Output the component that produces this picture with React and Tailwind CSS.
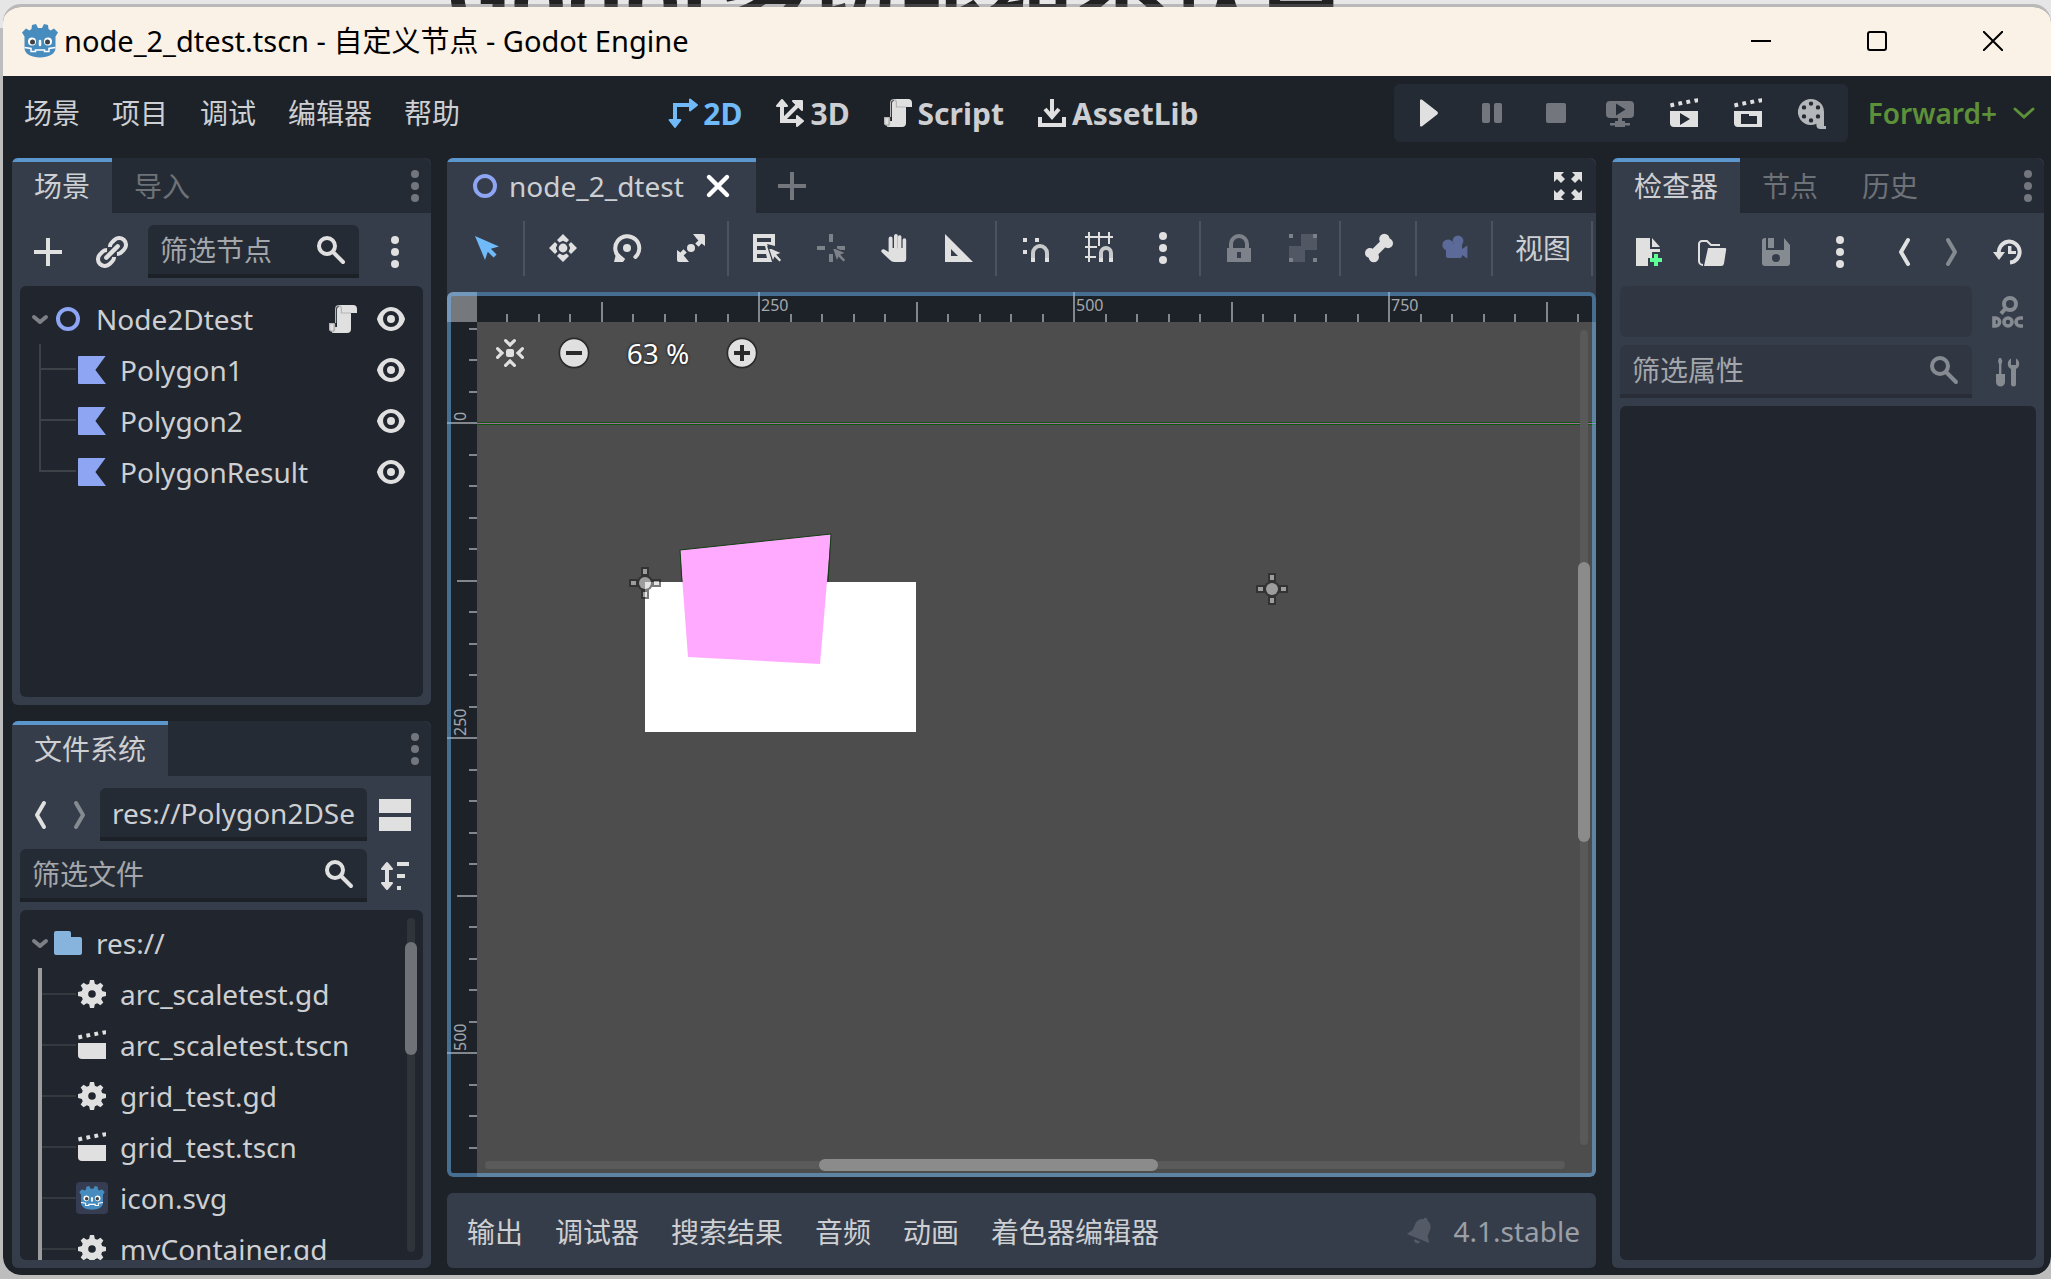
import React from "react";

const SANS = "font-['Noto_Sans','Noto_Sans_CJK_SC',sans-serif]";

function Icon({ children, className = "size-8 shrink-0" }) {
  return (
    <svg viewBox="0 0 16 16" className={className} fill="currentColor" aria-hidden="true">
      {children}
    </svg>
  );
}

const line = { fill: "none", stroke: "currentColor", strokeWidth: 2, strokeLinecap: "round", strokeLinejoin: "round" };

const Dots = (p) => (
  <Icon {...p}>
    <circle cx="8" cy="2" r="2" />
    <circle cx="8" cy="8" r="2" />
    <circle cx="8" cy="14" r="2" />
  </Icon>
);
const Add = (p) => (
  <Icon {...p}>
    <path d="M7 1v6H1v2h6v6h2V9h6V7H9V1z" />
  </Icon>
);
const Link = () => (
  <Icon>
    <g transform="rotate(-45 8 8)" fill="none" stroke="currentColor">
      <path strokeWidth="2" d="M7 5.500A3.100 3.100 0 0 0 4.800 4.600H2.900a3.400 3.400 0 0 0 0 6.800h1.900A3.100 3.100 0 0 0 7 10.500M9 5.500a3.100 3.100 0 0 1 2.200-.9h1.900a3.400 3.400 0 0 1 0 6.800h-1.900A3.100 3.100 0 0 1 9 10.500" />
      <path strokeWidth="2.200" strokeLinecap="round" d="M4 8h8" />
    </g>
  </Icon>
);
const Search = () => (
  <Icon>
    <circle cx="6" cy="6" r="4" fill="none" stroke="currentColor" strokeWidth="2" />
    <path d="M9 9l5 5" {...line} />
  </Icon>
);
const Eye = () => (
  <Icon>
    <path
      fillRule="evenodd"
      d="M8 2C5.443 2 2.209 3.948 1.045 7.705a1 1 0 0 0-.01.55C2.163 12.211 5.5 14 8 14s5.837-1.789 6.965-5.745a1 1 0 0 0 0-.526C13.861 3.935 10.557 2 8 2zm0 2a4 4 0 0 1 0 8 4 4 0 0 1 0-8zm0 2a2 2 0 0 0 0 4 2 2 0 0 0 0-4z"
    />
  </Icon>
);
const Script = () => (
  <Icon>
    <path d="M6 1v1a1 1 0 0 0-1 1v9H3.500v1a1 1 0 0 1-1 1v1H10a2 2 0 0 0 2-2V5h3V3a2 2 0 0 0-2-2z" />
    <path d="M1.300 10.300h2.200V13a1.100 1.100 0 0 1-2.200 0z" stroke="#b4b4b4" strokeWidth=".6" />
    <path d="M6 1.300a1.500 1.500 0 0 1 1.200 1.500V5H12M4.300 10V3A1.700 1.700 0 0 1 6 1.300M3.800 10.200V13a1.500 1.500 0 0 1-1.300 1.700" fill="none" stroke="#b4b4b4" strokeWidth=".6" />
  </Icon>
);
const Ring = () => (
  <Icon>
    <circle cx="8" cy="8" r="5" fill="none" stroke="#8da5f3" strokeWidth="2" />
  </Icon>
);
const Polygon = () => (
  <Icon>
    <path fill="#8da5f3" d="M1.500 1h13.300L9.700 8l5.300 7H1.500a.5.500 0 0 1-.5-.5v-13a.5.500 0 0 1 .5-.5z" />
  </Icon>
);
const Caret = () => (
  <svg viewBox="0 0 24 32" className="h-8 w-6 shrink-0" aria-hidden="true">
    <path d="M6 14l6 5 6-5" fill="none" stroke="#7d8085" strokeWidth="4" strokeLinecap="round" strokeLinejoin="round" />
  </svg>
);
const Folder = () => (
  <Icon>
    <path fill="#87b4dc" d="M2 2a1 1 0 0 0-1 1v10a1 1 0 0 0 1 1h12a1 1 0 0 0 1-1V6a1 1 0 0 0-1-1H9.500V3a1 1 0 0 0-1-1z" />
  </Icon>
);
const Gear = () => (
  <Icon>
    <circle cx="8" cy="8" r="3.600" fill="none" stroke="currentColor" strokeWidth="3.400" />
    {[0, 45, 90, 135, 180, 225, 270, 315].map((a) => (
      <path key={a} transform={`rotate(${a} 8 8)`} d="M7 1h2l.6 2.600H6.400z" />
    ))}
  </Icon>
);
const Clapper = ({ inner }) => (
  <Icon>
    <path d="M1 3.200l1.800-.4.5 1.900-1.900.5zM5 2.400l1.800-.4.5 1.900-1.900.5zM9 1.600l1.800-.4.5 1.900-1.900.5zM13 .9l2-.3v2l-1.500.3z" />
    <path fillRule="evenodd" d={`M1 7h14v8H3a2 2 0 0 1-2-2z${inner || ""}`} />
  </Icon>
);
const Arrow = ({ dir }) => (
  <Icon>
    <path d={dir === "left" ? "M10 2L6.500 8l3.500 6" : "M6 2l3.500 6L6 14"} {...line} />
  </Icon>
);
const Godot = ({ className }) => (
  <svg viewBox="0 0 36 34" className={className} aria-hidden="true">
    <path
      fill="#478cbf"
      d="M10 1l4-1 2 4h4l2-4 4 1 0.500 4 2 1.500L32 4.500l4 4-2.500 4V24c0 6-7 9.500-15.500 9.500S2.500 30 2.500 24V12.500L0 8.500l4-4 3.500 2L9.500 5z"
    />
    <path fill="none" stroke="#fff" strokeWidth="1.500" d="M2.500 23.500l6.500 1v3h4.500V26h9v1.500H27v-3l6.500-1" />
    <circle cx="10" cy="17.500" r="4" fill="#fff" />
    <circle cx="26" cy="17.500" r="4" fill="#fff" />
    <circle cx="10.500" cy="18" r="2.500" fill="#414042" />
    <circle cx="25.500" cy="18" r="2.500" fill="#414042" />
    <path stroke="#fff" strokeWidth="2.500" strokeLinecap="round" d="M18 17v4" />
  </svg>
);

function Btn({ label, className = "w-14", children, ...rest }) {
  return (
    <button type="button" aria-label={label} className={`flex h-[53px] shrink-0 items-center justify-center ${className}`} {...rest}>
      {children}
    </button>
  );
}

function TabBar({ tabs }) {
  return (
    <div role="tablist" className="flex h-[55px] shrink-0 items-stretch rounded-tr-lg bg-[#252b34]">
      {tabs.map((t, i) => (
        <button
          key={t}
          type="button"
          role="tab"
          aria-selected={i === 0}
          className={
            i === 0
              ? "border-t-4 border-[#5b96cc] bg-[#363d4a] px-[22px] pb-1 leading-10"
              : "border-t-4 border-transparent px-[22px] pb-1 leading-10 text-[#6d7178]"
          }
        >
          {t}
        </button>
      ))}
      <button type="button" aria-label="停靠栏选项" className="ml-auto flex w-8 items-center text-[#73777d]">
        <Dots />
      </button>
    </div>
  );
}

function Field({ label, icon, disabled, ...rest }) {
  return (
    <label
      className={
        disabled
          ? "flex h-[53px] min-w-0 flex-1 items-center rounded-t-md border-b-4 border-[#282d38] bg-[#303642] px-3 text-[#868a91]"
          : "flex h-[53px] min-w-0 flex-1 items-center rounded-t-md border-b-4 border-[#1c2027] bg-[#252b34] px-3"
      }
    >
      <input
        aria-label={label}
        className="w-0 min-w-0 flex-1 bg-transparent text-[#cdcfd2] outline-none placeholder:text-[#a3a6aa]"
        {...rest}
      />
      {icon && <Search />}
    </label>
  );
}

function SceneTree() {
  const nodes = ["Polygon1", "Polygon2", "PolygonResult"];
  return (
    <ul className="min-h-0 flex-1 overflow-hidden rounded-md bg-[#21262e] py-[7px]">
      <li className="flex h-[51px] items-center pr-4 pl-2">
        <Caret />
        <Ring />
        <span className="ml-3 flex-1">Node2Dtest</span>
        <button type="button" aria-label="打开脚本" className="mr-4 text-[#e0e0e0]">
          <Script />
        </button>
        <button type="button" aria-label="切换可见性" className="text-[#e0e0e0]">
          <Eye />
        </button>
      </li>
      {nodes.map((n, i) => (
        <li key={n} className="flex h-[51px] items-center pr-4">
          <span className="flex h-full w-14 flex-col pl-[19px]">
            <span className="h-[26px] border-b-2 border-l-2 border-[#3d4249]" />
            <span className={i < nodes.length - 1 ? "flex-1 border-l-2 border-[#3d4249]" : "flex-1"} />
          </span>
          <Polygon />
          <span className="ml-3 flex-1">{n}</span>
          <button type="button" aria-label="切换可见性" className="text-[#e0e0e0]">
            <Eye />
          </button>
        </li>
      ))}
    </ul>
  );
}

function FileList() {
  const files = [
    ["arc_scaletest.gd", "gd"],
    ["arc_scaletest.tscn", "scene"],
    ["grid_test.gd", "gd"],
    ["grid_test.tscn", "scene"],
    ["icon.svg", "img"],
    ["myContainer.gd", "gd"],
  ];
  return (
    <div className="flex min-h-0 flex-1 overflow-hidden rounded-md bg-[#21262e] pr-[6px]">
      <ul className="min-w-0 flex-1 pt-[7px]">
        <li className="flex h-[51px] items-center pl-2">
          <Caret />
          <Folder />
          <span className="ml-3 text-[#cdcfd2]">res://</span>
        </li>
        {files.map(([name, kind]) => (
          <li key={name} className="flex h-[51px] items-center text-[#cdcfd2]">
            <span className="flex h-full w-14 flex-col pl-[18px]">
              <span className="flex h-full items-center border-l-4 border-[#9b9c9e]">
                <span className="h-[2px] flex-1 bg-[#343940]" />
              </span>
            </span>
            <span className="text-[#e0e0e0]">
              {kind === "gd" && <Gear />}
              {kind === "scene" && <Clapper />}
              {kind === "img" && (
                <span className="flex size-8 items-center justify-center rounded-sm bg-[#363d52]">
                  <Godot className="h-6 w-[26px]" />
                </span>
              )}
            </span>
            <span className="ml-3">{name}</span>
          </li>
        ))}
      </ul>
      <div className="my-2 flex w-3 justify-center">
        <div className="h-full w-2 rounded bg-[#2f343b]">
          <div className="mt-6 -ml-[2px] h-[113px] w-3 rounded-md bg-[#6f7276]" />
        </div>
      </div>
    </div>
  );
}

function Sep() {
  return <span className="h-[55px] w-1 shrink-0 border-l-2 border-[#4c525e]" />;
}

const tick = "#82868d";

function HRuler() {
  const marks = Array.from({ length: 80 }, (_, i) => i + 2);
  return (
    <svg className="h-[30px] w-full bg-[#1d2229]" aria-hidden="true">
      {marks.map((k) => {
        const x = Math.round(k * 31.5 - 34);
        const h = k % 10 === 0 ? 30 : k % 5 === 0 ? 20 : 8;
        return <rect key={k} x={x} y={30 - h} width="2" height={h} fill={tick} />;
      })}
      {[10, 20, 30].map((k) => (
        <text key={k} x={Math.round(k * 31.5 - 31)} y="19" fontSize="16" fill="#a4a8ad">
          {k * 25}
        </text>
      ))}
    </svg>
  );
}

function VRuler() {
  const marks = Array.from({ length: 60 }, (_, i) => i - 3);
  return (
    <svg className="h-full w-[30px] bg-[#1d2229]" aria-hidden="true">
      {marks.map((k) => {
        const y = Math.round(k * 31.5 + 100);
        const w = k % 10 === 0 ? 30 : k % 5 === 0 ? 20 : 8;
        return <rect key={k} x={30 - w} y={y} width={w} height="2" fill={tick} />;
      })}
      {[0, 10, 20].map((k) => (
        <text key={k} transform={`translate(19 ${Math.round(k * 31.5 + 99)}) rotate(-90)`} fontSize="16" fill="#a4a8ad">
          {k * 25}
        </text>
      ))}
    </svg>
  );
}

function Pivot({ x, y }) {
  return (
    <g transform={`translate(${x} ${y})`} opacity=".6">
      <g fill="#222">
        <circle r="8" />
        <path d="M-4-16h8v32h-8zM-16-4h32v8h-32z" />
      </g>
      <g fill="#d2d2d2">
        <circle r="6" />
        <path d="M-2-14h4v5h-4zM-2 9h4v5h-4zM-14-2h5v4h-5zM9-2h5v4H9z" />
      </g>
    </g>
  );
}

function Viewport() {
  return (
    <div className="relative grid min-h-0 flex-1 grid-cols-[30px_minmax(0,1fr)] grid-rows-[30px_minmax(0,1fr)] overflow-hidden rounded-md bg-[#4d4d4d]">
      <div className="bg-[#75787d]" />
      <HRuler />
      <VRuler />
      <div className="relative min-h-0">
        <svg className="absolute inset-0 size-full" aria-label="2D 画布">
          <rect x="0" y="100" width="100%" height="3" fill="#0c5a0c" />
          <rect x="0" y="101" width="100%" height="1" fill="#a566a0" />
          <rect x="168" y="260" width="271" height="150" fill="#fff" />
          <path d="M203 228L354 212 343 342 211 335z" fill="#ffaaff" />
          <path d="M205 260L203 228 354 212 351 260" fill="none" stroke="#103c10" strokeWidth="1" />
          <Pivot x={168} y={261} />
          <Pivot x={795} y={267} />
        </svg>
        <div className="absolute top-3 left-[9px] flex items-center text-white">
          <button type="button" aria-label="居中视图" className="flex w-12 justify-center">
            <Icon>
              <rect x="6" y="6" width="4" height="4" rx="1" fill="#e0e0e0" />
              <path d="M5.800 1.800L8 4l2.200-2.200M5.800 14.200L8 12l2.200 2.200M1.800 5.800L4 8l-2.200 2.200M14.200 5.800L12 8l2.200 2.200" stroke="#e0e0e0" fill="none" strokeWidth="1.600" strokeLinecap="round" />
            </Icon>
          </button>
          <button type="button" aria-label="缩小" className="ml-4 flex w-12 justify-center">
            <Icon>
              <circle cx="8" cy="8" r="7.300" fill="#e0e0e0" stroke="#2a2a2a" strokeWidth=".8" />
              <path d="M4 7h8v2H4z" fill="#2a2a2a" />
            </Icon>
          </button>
          <button type="button" className="w-[120px] text-center leading-[38px] [text-shadow:0_0_3px_#000]">
            63 %
          </button>
          <button type="button" aria-label="放大" className="flex w-12 justify-center">
            <Icon>
              <circle cx="8" cy="8" r="7.300" fill="#e0e0e0" stroke="#2a2a2a" strokeWidth=".8" />
              <path d="M4 7h3V4h2v3h3v2H9v3H7V9H4z" fill="#2a2a2a" />
            </Icon>
          </button>
        </div>
        <div className="absolute top-2 right-[8px] bottom-8 w-2 rounded bg-[#595959]">
          <div className="mt-[232px] -ml-[2px] h-[280px] w-3 rounded-md bg-[#8b8b8b]" />
        </div>
        <div className="absolute right-[31px] bottom-2 left-2 flex h-2 items-center rounded bg-[#5a5a5a]">
          <div className="ml-[334px] h-3 w-[339px] shrink-0 rounded-md bg-[#8b8b8b]" />
        </div>
      </div>
      <div className="pointer-events-none absolute inset-0 rounded-md border-4 border-[#70bafa]/50" />
    </div>
  );
}

function CanvasToolbar() {
  const dim = "text-[#7d828a]";
  return (
    <div className="flex h-[79px] shrink-0 items-start gap-2 overflow-hidden pt-2 pl-3 text-[#e0e0e0]">
      <Btn label="选择">
        <Icon>
          <path fill="#70bafa" d="M2 2l12 5.200-4.100 1.200 2.900 2.900-1.500 1.500-2.900-2.900L7 14z" />
        </Icon>
      </Btn>
      <Sep />
      <Btn label="移动">
        <Icon>
          <circle cx="8" cy="8" r="2.200" />
          <path d="M8 1l3 3-1.200 1.200L8 4.400l-1.800.8L5 4zM8 15l3-3-1.200-1.200-1.800.8-1.800-.8L5 12zM1 8l3-3 1.200 1.200L4.400 8l.8 1.800L4 11zM15 8l-3-3-1.200 1.200.8 1.800-.8 1.800L12 11z" />
        </Icon>
      </Btn>
      <Btn label="旋转">
        <Icon>
          <circle cx="8" cy="8" r="2" />
          <path d="M5 13.200A6 6 0 1 1 12.200 12.500" {...line} />
          <path d="M1.500 15l1.300-5.200 4.300 3.700L6 15z" />
        </Icon>
      </Btn>
      <Btn label="缩放">
        <Icon>
          <circle cx="8" cy="8" r="2" />
          <path d="M9 1h5a1 1 0 0 1 1 1v5l-1.700-1.200-1.500 1.600-1.700-1.700 1.600-1.500-.7-.7zM7 15H2a1 1 0 0 1-1-1V9l1.700 1.200 1.500-1.600 1.700 1.700-1.600 1.500.7.700z" />
        </Icon>
      </Btn>
      <Sep />
      <Btn label="列表选择">
        <Icon>
          <path fillRule="evenodd" d="M1 1h11v6L8 6 9.500 10l1 5H1zM3 3v2h7V3zM3 7v2h4.500L7 7zM3 11v2h5l-.5-2z" />
          <path d="M8.500 7.500l7 3-2.400.9 2.400 2.600-1.200 1.200-2.500-2.400L11 15z" stroke="#363d4a" strokeWidth=".6" />
        </Icon>
      </Btn>
      <Btn label="轴心" className={`w-14 ${dim}`}>
        <Icon>
          <path d="M7 1h2v4H7zM1 7h4v2H1zM11 7h4v2h-4zM7 11h2v4H7z" />
          <path d="M8.500 7.500l7 3-2.400.9 2.400 2.600-1.200 1.200-2.500-2.400L11 15z" stroke="#363d4a" strokeWidth=".6" />
        </Icon>
      </Btn>
      <Btn label="平移">
        <Icon>
          <path d="M8.500 1a1 1 0 0 0-1 1v6h-.7V3.200a1 1 0 0 0-2 0V10L2.700 8.800C1.500 8.200.6 9.500 1.500 10.300L5.500 14c.6.600 1.200 1 2.200 1H12a1.600 1.600 0 0 0 1.600-1.600V4a.9.900 0 0 0-1.800 0v4h-.6V2.200a.9.900 0 0 0-1.700 0v6h-.1V2a1 1 0 0 0-.9-1z" />
        </Icon>
      </Btn>
      <Btn label="标尺">
        <Icon>
          <path fillRule="evenodd" d="M1 1v14h14zm3 7.500L7.500 12H4z" />
        </Icon>
      </Btn>
      <Sep />
      <Btn label="智能吸附">
        <Icon>
          <path d="M2 3h2v2H2zM2 9h2v2H2zM8 3h2v2H8z" />
          <path d="M7 13v-2.500a3.500 3.500 0 0 1 7 0V13" fill="none" stroke="#c8c9cb" strokeWidth="2" />
          <path d="M6 13h2v2H6zM13 13h2v2h-2z" />
        </Icon>
      </Btn>
      <Btn label="栅格吸附">
        <Icon>
          <path d="M3 0v15M8 0v7M13 0v6M1 2.500h14M1 7.500h6M1 12.500h5.500" fill="none" stroke="currentColor" />
          <path d="M9 13v-2.500a2.500 2.500 0 0 1 5 0V13" fill="none" stroke="#c8c9cb" strokeWidth="2" />
          <path d="M8 13h2v2H8zM13 13h2v2h-2z" />
        </Icon>
      </Btn>
      <Btn label="吸附选项">
        <Dots />
      </Btn>
      <Sep />
      <Btn label="锁定" className={`w-14 ${dim}`}>
        <Icon>
          <path fillRule="evenodd" d="M8 1a5 5 0 0 0-5 5v2H2v7h12V8h-1V6a5 5 0 0 0-5-5zm0 2a3 3 0 0 1 3 3v2H5V6a3 3 0 0 1 3-3zM7 10h2v3H7z" />
        </Icon>
      </Btn>
      <Btn label="编组" className={`w-14 ${dim}`}>
        <Icon>
          <path d="M7 1h8v8H9v6H1V7h6z" opacity=".4" />
          <path d="M1 1h2v2H1zM13 1h2v2h-2zM1 13h2v2H1zM13 13h2v2h-2z" />
        </Icon>
      </Btn>
      <Sep />
      <Btn label="骨骼">
        <Icon>
          <circle cx="10.700" cy="3.500" r="2.600" />
          <circle cx="12.500" cy="5.600" r="2.500" />
          <circle cx="3.500" cy="10.500" r="2.500" />
          <circle cx="5.400" cy="12.500" r="2.600" />
          <path d="M4.500 11.500l7-7" stroke="currentColor" strokeWidth="4" />
        </Icon>
      </Btn>
      <Sep />
      <Btn label="相机" className="w-14 text-[#5c6a99]">
        <Icon>
          <circle cx="9.500" cy="4.500" r="2.700" />
          <circle cx="4.500" cy="6.500" r="2.800" />
          <path d="M3.500 6h8v2.500l2.700-1.700v6.400l-2.700-1.700V12a1 1 0 0 1-1 1h-6a1 1 0 0 1-1-1z" />
        </Icon>
      </Btn>
      <Sep />
      <Btn label="视图" className="px-3 text-[#cdcfd2]">
        视图
      </Btn>
      <Sep />
    </div>
  );
}

export default function App() {
  return (
    <div className={`relative flex h-screen flex-col overflow-hidden bg-[#bdbdbd] pt-1 pb-1 pl-[3px] text-[28px] text-[#cdcfd2] ${SANS}`}>
      <div className="absolute inset-x-0 top-0 h-7 bg-[#e6e6e6]">
        <div className="h-2 overflow-hidden">
          <p className="-mt-[54px] ml-[446px] font-['Noto_Sans_CJK_SC',sans-serif] text-[90px] leading-[90px] font-bold whitespace-nowrap text-[#222]">
            Godot多功能组不认目
          </p>
        </div>
      </div>
      <div className="relative flex min-h-0 flex-1 flex-col overflow-hidden rounded-[18px] border-t-3 border-[#767676]/40 bg-[#1d2229] bg-clip-padding">
        <header className="flex h-[69px] shrink-0 items-center bg-[#faf1e7] pb-[2px] pl-[19px] text-[29px] text-black">
          <Godot className="h-[34px] w-9" />
          <h1 className="ml-[6px] flex-1 font-normal">node_2_dtest.tscn - 自定义节点 - Godot Engine</h1>
          <button type="button" aria-label="最小化" className="flex h-full w-[116px] items-center justify-center">
            <svg viewBox="0 0 20 20" className="size-5" stroke="#000" strokeWidth="2">
              <path d="M0 10h20" />
            </svg>
          </button>
          <button type="button" aria-label="最大化" className="flex h-full w-[116px] items-center justify-center">
            <svg viewBox="0 0 20 20" className="size-5" stroke="#000" strokeWidth="2" fill="none">
              <rect x="1" y="1" width="18" height="18" rx="2" />
            </svg>
          </button>
          <button type="button" aria-label="关闭" className="flex h-full w-[116px] items-center justify-center">
            <svg viewBox="0 0 20 20" className="size-5" stroke="#000" strokeWidth="2">
              <path d="M0 0l20 20M20 0L0 20" />
            </svg>
          </button>
        </header>

        <div className="flex h-[82px] shrink-0 items-center justify-between pr-4 pb-2 pl-[21px]">
          <nav className="flex gap-8">
            {["场景", "项目", "调试", "编辑器", "帮助"].map((m) => (
              <button key={m} type="button">
                {m}
              </button>
            ))}
          </nav>
          <div className="ml-3 flex gap-8 text-[30px] font-bold">
            <button type="button" className="flex items-center gap-1 text-[#70bafa]">
              <Icon>
                <path d="M4 12V4h8" fill="none" stroke="currentColor" strokeWidth="2" />
                <path d="M11.500 1.300L15 4l-3.500 2.700zM1.300 11.500L4 15l2.700-3.500z" stroke="currentColor" strokeLinejoin="round" />
              </Icon>
              2D
            </button>
            <button type="button" className="flex items-center gap-1">
              <Icon>
                <path d="M4 3v9h9M4 12l8-8" fill="none" stroke="#e0e0e0" strokeWidth="2" />
                <path d="M1.500 4.500L4 1.500l2.500 3zM11.500 9.500l3 2.500-3 2.500zM9.500 2H14v4.500z" fill="#e0e0e0" stroke="#e0e0e0" strokeLinejoin="round" />
              </Icon>
              3D
            </button>
            <button type="button" className="flex items-center gap-1">
              <span className="text-[#e0e0e0]">
                <Script />
              </span>
              Script
            </button>
            <button type="button" className="flex items-center gap-1">
              <Icon>
                <path d="M8 1v9M4.500 6L8 10l3.500-4M2 10v4h12v-4" fill="none" stroke="#e0e0e0" strokeWidth="2" />
              </Icon>
              AssetLib
            </button>
          </div>
          <div className="flex items-center">
            <div className="flex h-[58px] items-center gap-2 rounded-md bg-[#252b34] pr-2 pl-[6px] text-[#e0e0e0]">
              <Btn label="运行项目">
                <Icon>
                  <path d="M4 1.800v12.400a.6.600 0 0 0 .9.500l7.700-6a.9.900 0 0 0 0-1.400l-7.700-6a.6.600 0 0 0-.9.500z" />
                </Icon>
              </Btn>
              <Btn label="暂停" className="w-14 text-[#73777d]">
                <Icon>
                  <rect x="3" y="3" width="4" height="10" rx="1" />
                  <rect x="9" y="3" width="4" height="10" rx="1" />
                </Icon>
              </Btn>
              <Btn label="停止" className="w-14 text-[#73777d]">
                <Icon>
                  <rect x="3" y="3" width="10" height="10" rx="1" />
                </Icon>
              </Btn>
              <Btn label="远程调试" className="w-14 text-[#73777d]">
                <Icon>
                  <path fillRule="evenodd" d="M3 2a2 2 0 0 0-2 2v4.500a2 2 0 0 0 2 2h4V12H5.500v1H3v1.200h2.500v.8h5v-.8H13V13h-2.500v-1H9v-1.500h4a2 2 0 0 0 2-2V4a2 2 0 0 0-2-2zM6 3.300L10.800 6.300 6 9.300z" />
                </Icon>
              </Btn>
              <Btn label="运行当前场景">
                <Clapper inner="M6 8v6l5-3z" />
              </Btn>
              <Btn label="运行自定义场景">
                <Clapper inner="M4.500 8.500v5h8v-4h-4v-1z" />
              </Btn>
              <Btn label="影片制作模式" className="w-14 text-[#b4b7ba]">
                <Icon>
                  <path
                    fillRule="evenodd"
                    d="M7.500 1a6.500 6.500 0 1 0 2.700 12.400V14a2 2 0 0 0 2 2H15v-1.500h-1V7.500A6.500 6.500 0 0 0 7.500 1zm0 1.200a1.100 1.100 0 1 1 0 2.200 1.100 1.100 0 0 1 0-2.200zM4 4.100a1.100 1.100 0 1 1 0 2.200 1.100 1.100 0 0 1 0-2.200zm7 0a1.100 1.100 0 1 1 0 2.200 1.100 1.100 0 0 1 0-2.200zM4 8.600a1.100 1.100 0 1 1 0 2.200 1.100 1.100 0 0 1 0-2.200zm7 0a1.100 1.100 0 1 1 0 2.200 1.100 1.100 0 0 1 0-2.200zm-3.500 2a1.100 1.100 0 1 1 0 2.200 1.100 1.100 0 0 1 0-2.200z"
                  />
                </Icon>
              </Btn>
            </div>
            <button type="button" className="ml-5 flex items-center gap-4 font-semibold text-[#5d9139]">
              Forward+
              <svg viewBox="0 0 22 12" className="h-3 w-[22px]" aria-hidden="true">
                <path d="M2 2l9 8 9-8" fill="none" stroke="currentColor" strokeWidth="3" strokeLinecap="round" />
              </svg>
            </button>
          </div>
        </div>

        <main className="flex min-h-0 flex-1 gap-4 pr-[7px] pb-[7px] pl-[9px]">
          <aside className="flex w-[419px] shrink-0 flex-col gap-4">
            <section className="flex min-h-0 flex-1 flex-col overflow-hidden rounded-md bg-[#363d4a]">
              <TabBar tabs={["场景", "导入"]} />
              <div className="flex min-h-0 flex-1 flex-col gap-2 px-2 pt-3 pb-2">
                <div className="flex gap-2 text-[#e0e0e0]">
                  <Btn label="添加节点">
                    <Add />
                  </Btn>
                  <Btn label="实例化场景">
                    <Link />
                  </Btn>
                  <Field label="筛选节点" placeholder="筛选节点" icon />
                  <Btn label="更多选项">
                    <Dots />
                  </Btn>
                </div>
                <SceneTree />
              </div>
            </section>
            <section className="flex min-h-0 flex-1 flex-col overflow-hidden rounded-md bg-[#363d4a]">
              <TabBar tabs={["文件系统"]} />
              <div className="flex min-h-0 flex-1 flex-col gap-2 px-2 pt-3 pb-2 text-[#e0e0e0]">
                <div className="flex">
                  <Btn label="后退" className="w-10">
                    <Arrow dir="left" />
                  </Btn>
                  <Btn label="前进" className="w-10 text-[#868a91]">
                    <Arrow dir="right" />
                  </Btn>
                  <Field label="路径" defaultValue="res://Polygon2DSe" />
                  <Btn label="切换拆分模式" className="mx-2 w-10">
                    <Icon>
                      <path d="M0 0h16v7H0zM0 9h16v7H0z" />
                    </Icon>
                  </Btn>
                </div>
                <div className="flex">
                  <Field label="筛选文件" placeholder="筛选文件" icon />
                  <Btn label="排序" className="mx-2 w-10">
                    <Icon>
                      <path d="M9 1h6v2H9zM9 7h4v2H9zM9 13h2v2H9z" />
                      <path d="M4 3v10" fill="none" stroke="currentColor" strokeWidth="2" />
                      <path d="M1.500 4.500L4 1.500l2.500 3zM1.500 11.500L4 14.500l2.500-3z" stroke="currentColor" strokeLinejoin="round" />
                    </Icon>
                  </Btn>
                </div>
                <FileList />
              </div>
            </section>
          </aside>

          <div className="flex min-w-0 flex-1 flex-col gap-4">
            <section className="flex min-h-0 flex-1 flex-col overflow-hidden rounded-md bg-[#363d4a]">
              <div className="flex h-[55px] shrink-0 items-stretch rounded-tr-lg bg-[#252b34]">
                <div className="flex items-center border-t-4 border-[#5b96cc] bg-[#363d4a] px-[22px] pb-1">
                  <button type="button" role="tab" aria-selected="true" className="flex items-center gap-2 leading-10">
                    <Ring />
                    node_2_dtest
                  </button>
                  <button type="button" aria-label="关闭场景" className="ml-[18px] text-white">
                    <Icon>
                      <path d="M3.500 3.500l9 9M12.500 3.500l-9 9" stroke="currentColor" strokeWidth="2.200" strokeLinecap="round" />
                    </Icon>
                  </button>
                </div>
                <button type="button" aria-label="新建场景" className="ml-5 text-[#73777d]">
                  <Add />
                </button>
                <button type="button" aria-label="专注模式" className="mr-3 ml-auto text-[#e0e0e0]">
                  <Icon>
                    <path d="M1 1h5L4.500 2.500l2 2-2 2-2-2L1 6zM15 1h-5l1.500 1.500-2 2 2 2 2-2L15 6zM1 15h5l-1.500-1.500 2-2-2-2-2 2L1 10zM15 15h-5l1.500-1.500-2-2 2-2 2 2L15 10z" />
                  </Icon>
                </button>
              </div>
              <CanvasToolbar />
              <Viewport />
            </section>
            <footer className="flex h-[75px] shrink-0 items-center gap-8 rounded-md bg-[#363d4a] pr-4 pl-5">
              {["输出", "调试器", "搜索结果", "音频", "动画", "着色器编辑器"].map((t) => (
                <button key={t} type="button" className="shrink-0 pt-[2px]">
                  {t}
                </button>
              ))}
              <span className="ml-auto flex items-center gap-4 text-[#9b9fa6]">
                <span className="text-[#555b66]">
                  <Icon>
                    <g transform="rotate(22 8 8)">
                      <path d="M8 1a1 1 0 0 0-1 1C5 2.500 4 4 4 6v3l-2 3h12l-2-3V6c0-2-1-3.500-3-4a1 1 0 0 0-1-1zM6.500 13a1.500 1.500 0 0 0 3 0z" />
                    </g>
                  </Icon>
                </span>
                4.1.stable
              </span>
            </footer>
          </div>

          <aside className="flex w-[432px] shrink-0 flex-col overflow-hidden rounded-md bg-[#363d4a]">
            <TabBar tabs={["检查器", "节点", "历史"]} />
            <div className="flex min-h-0 flex-1 flex-col gap-2 px-2 pt-3 pb-2">
              <div className="flex gap-2 text-[#e0e0e0]">
                <Btn label="新建资源">
                  <Icon>
                    <path d="M2 1v14h6v-4h2V8h4V6.500H9V1z" />
                    <path d="M10 1v4.500h4z" />
                    <path d="M11 9h2v2h2v2h-2v2h-2v-2H9v-2h2z" fill="#5fff97" />
                  </Icon>
                </Btn>
                <Btn label="打开资源">
                  <Icon>
                    <path d="M3.500 14.500a2 2 0 0 1-2-2V4a1.500 1.500 0 0 1 1.500-1.500h2.500L7.500 4.500H12" fill="none" stroke="currentColor" />
                    <path d="M6 6h8.500a.6.600 0 0 1 .6.700l-1.100 7a1.500 1.500 0 0 1-1.500 1.300H4z" />
                  </Icon>
                </Btn>
                <Btn label="保存资源" className="w-14 text-[#868a91]">
                  <Icon>
                    <path fillRule="evenodd" d="M2.500 1H3v6h9V1l3 3.500v9a1.500 1.500 0 0 1-1.500 1.500h-11A1.500 1.500 0 0 1 1 13.500v-11A1.500 1.500 0 0 1 2.500 1zM8 9a2 2 0 1 0 0 4 2 2 0 0 0 0-4zM4 1h3v5H4z" />
                  </Icon>
                </Btn>
                <Btn label="资源选项">
                  <Dots />
                </Btn>
                <Btn label="上一个对象" className="ml-auto w-10">
                  <Arrow dir="left" />
                </Btn>
                <Btn label="下一个对象" className="w-10 text-[#868a91]">
                  <Arrow dir="right" />
                </Btn>
                <Btn label="历史记录">
                  <Icon>
                    <path d="M3.500 9A5.200 5.200 0 1 1 9 13.200" fill="none" stroke="currentColor" strokeWidth="2" />
                    <path d="M.5 8h6l-3 4z" />
                    <path d="M8 5v4h4V7.500H9.700V5z" />
                  </Icon>
                </Btn>
              </div>
              <div className="flex h-[51px] items-center gap-2 text-[#868a91]">
                <button type="button" aria-label="当前对象" className="h-full flex-1 rounded-md bg-[#303642]" />
                <Btn label="打开文档">
                  <Icon>
                    <circle cx="9" cy="4" r="3" fill="none" stroke="currentColor" strokeWidth="2" />
                    <path d="M7 6L4.500 8.800" fill="none" stroke="currentColor" strokeWidth="2" />
                    <path d="M1 11v4h.8a2 2 0 0 0 0-4zM15.500 11H14a2 2 0 0 0 0 4h1.500" fill="none" stroke="currentColor" strokeWidth="1.800" />
                    <circle cx="8" cy="13" r="2" fill="none" stroke="currentColor" strokeWidth="1.800" />
                  </Icon>
                </Btn>
              </div>
              <div className="flex gap-2 text-[#868a91]">
                <Field label="筛选属性" placeholder="筛选属性" icon disabled />
                <Btn label="管理属性">
                  <Icon>
                    <path d="M3.500 1h1l.7 1.500-.5 1.800V9H6.500v4a2 2 0 0 1-4.500 0V9h1.500V4.300L3 2.500z" />
                    <path d="M9.500 1.200a3 3 0 0 0 0 5.300V14a1.200 1.200 0 0 0 2.500 0V6.500a3 3 0 0 0 0-5.300v3.300H9.500z" />
                  </Icon>
                </Btn>
              </div>
              <div className="min-h-0 flex-1 rounded-md bg-[#21262e]" />
            </div>
          </aside>
        </main>
      </div>
    </div>
  );
}
